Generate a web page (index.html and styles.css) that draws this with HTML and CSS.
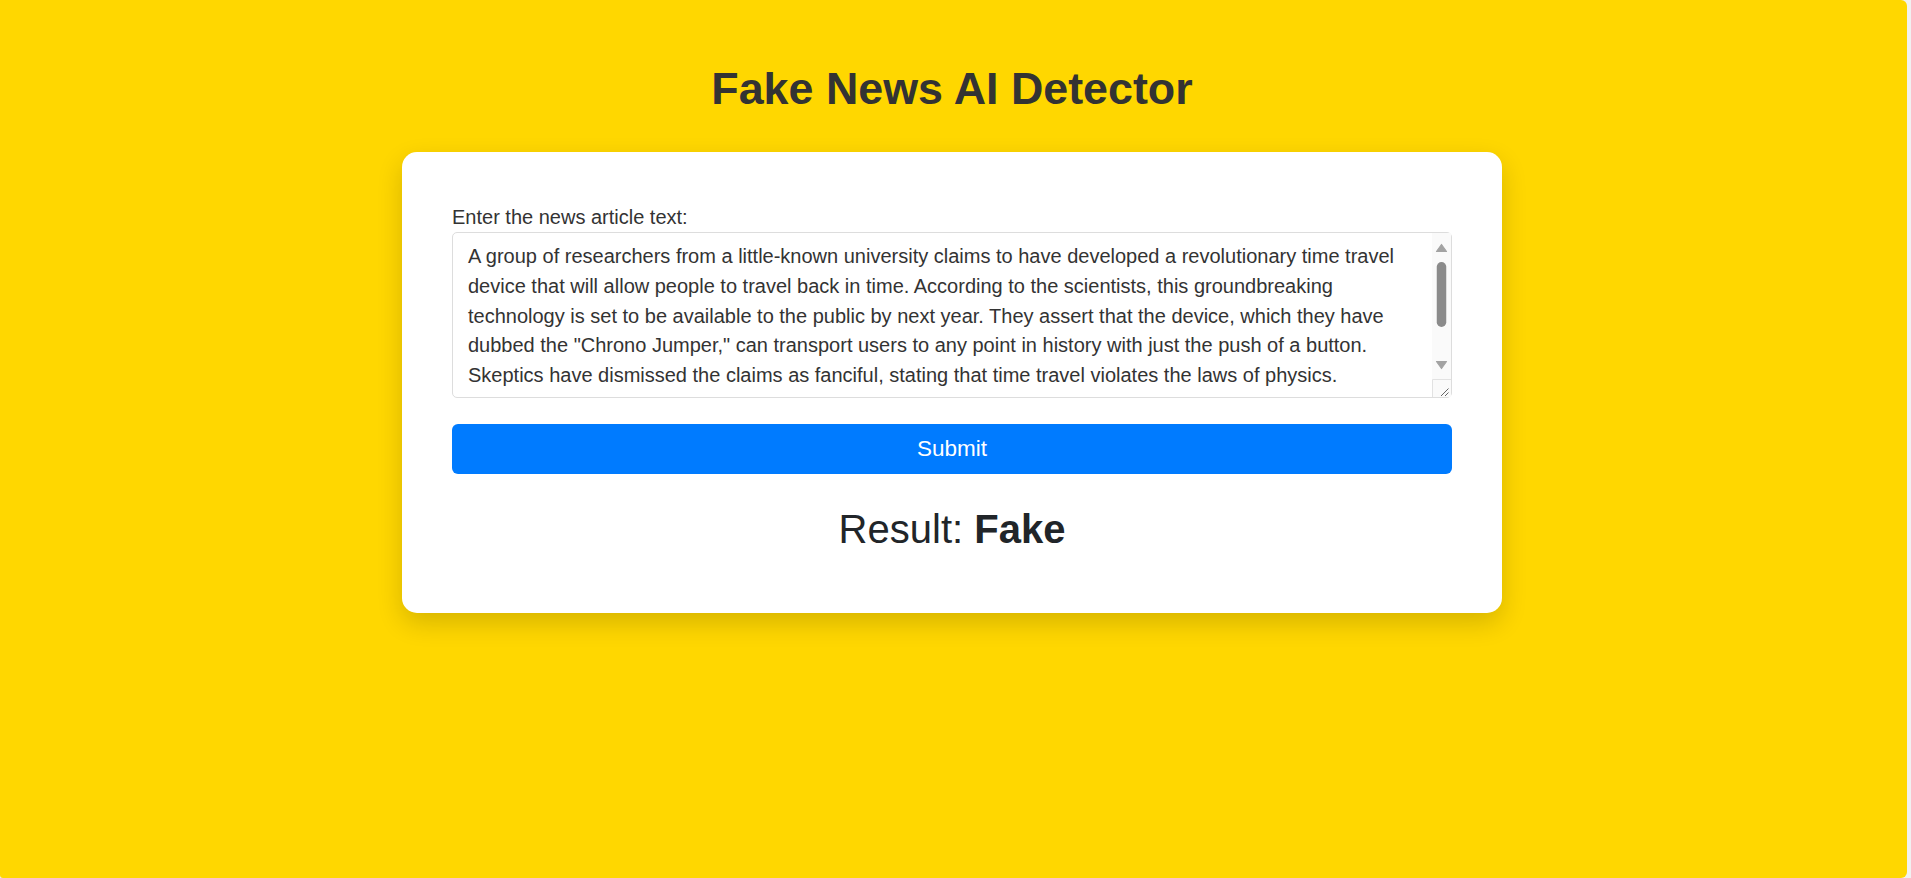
FILE: index.html
```html
<!DOCTYPE html>
<html lang="en">
<head>
<meta charset="utf-8">
<title>Fake News AI Detector</title>
<link rel="stylesheet" href="styles.css">
</head>
<body>
<div class="page">
  <h1 class="title">Fake News AI Detector</h1>
  <div class="card">
    <label class="label" for="article">Enter the news article text:</label>
    <div class="field">
      <textarea id="article" class="input">A group of researchers from a little-known university claims to have developed a revolutionary time travel device that will allow people to travel back in time. According to the scientists, this groundbreaking technology is set to be available to the public by next year. They assert that the device, which they have dubbed the "Chrono Jumper," can transport users to any point in history with just the push of a button. Skeptics have dismissed the claims as fanciful, stating that time travel violates the laws of physics.</textarea>
      <svg class="scrollbar" width="19" height="164" viewBox="0 0 19 164" aria-hidden="true">
        <rect x="0" y="0" width="19" height="164" fill="#fafafa"/>
        <path d="M9.5 11.5 L14.5 18.5 L4.5 18.5 Z" fill="#a3a3a3" stroke="#a3a3a3" stroke-width="1.2" stroke-linejoin="round"/>
        <rect x="4.75" y="29" width="9.5" height="65" rx="4.75" fill="#8b8b8b"/>
        <path d="M4.5 128.5 L14.5 128.5 L9.5 135.5 Z" fill="#a3a3a3" stroke="#a3a3a3" stroke-width="1.2" stroke-linejoin="round"/>
        <path d="M0.5 164 L0.5 146.5 L19 146.5" fill="none" stroke="#e2e2e2" stroke-width="1"/>
        <path d="M16.5 155.5 L9 163" stroke="#666" stroke-width="1"/>
        <path d="M16.5 159.5 L13 163" stroke="#666" stroke-width="1"/>
      </svg>
    </div>
    <button class="submit" type="button">Submit</button>
    <div class="result">Result: <strong>Fake</strong></div>
  </div>
</div>
</body>
</html>
```
FILE: styles.css
```css
html, body {
  margin: 0;
  padding: 0;
}
body {
  background: #f1f1f1;
  font-family: "Liberation Sans", Arial, Helvetica, sans-serif;
  overflow: hidden;
}
.page {
  box-sizing: border-box;
  width: calc(100% - 4px);
  height: 100vh;
  padding-right: 3px;
  background: #ffd700;
  border-radius: 0 6px 6px 3px;
  overflow: hidden;
}
.title {
  margin: 62px 0 0;
  font-size: 44.8px;
  line-height: 52px;
  font-weight: bold;
  color: #333333;
  text-align: center;
}
.card {
  box-sizing: border-box;
  width: 1100px;
  margin: 38px auto 0;
  padding: 50px;
  background: #ffffff;
  border-radius: 15px;
  box-shadow: 0 10px 26px rgba(0, 0, 0, 0.16);
}
.label {
  display: block;
  font-size: 20px;
  line-height: 30px;
  color: #333333;
}
.field {
  position: relative;
}
.input {
  display: block;
  box-sizing: border-box;
  width: 100%;
  height: 166px;
  margin: 0;
  padding: 9px 34px 7px 15px;
  font-family: "Liberation Sans", Arial, Helvetica, sans-serif;
  font-size: 20px;
  line-height: 29.8px;
  color: #333333;
  background: #ffffff;
  border: 1px solid #dddddd;
  border-radius: 5px;
  resize: none;
  overflow: hidden;
  outline: none;
}
.scrollbar {
  position: absolute;
  top: 1px;
  right: 1px;
  display: block;
}
.submit {
  display: block;
  width: 100%;
  height: 50px;
  margin: 26px 0 0;
  padding: 0;
  border: none;
  border-radius: 6px;
  background: #007bff;
  color: #ffffff;
  font-family: "Liberation Sans", Arial, Helvetica, sans-serif;
  font-size: 22.5px;
  cursor: pointer;
}
.result {
  margin: 32px 0 11px;
  font-size: 40px;
  line-height: 46px;
  color: #212529;
  text-align: center;
}
.result strong {
  font-weight: bold;
}
```
